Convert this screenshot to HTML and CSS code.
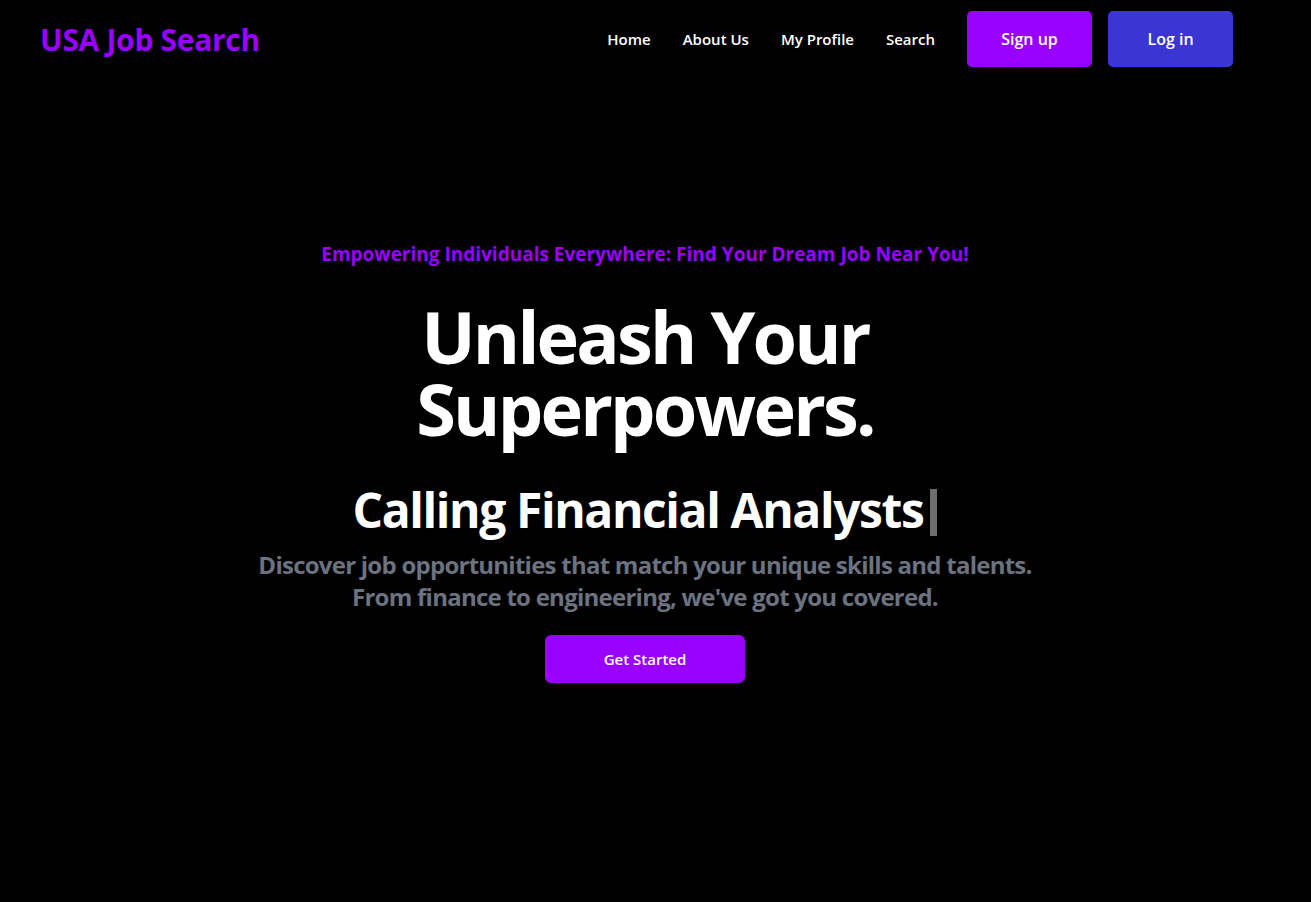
FILE: index.html
```html
<!DOCTYPE html>
<html lang="en">
<head>
<meta charset="utf-8">
<title>USA Job Search</title>
<link rel="stylesheet" href="styles.css">
</head>
<body>
<header class="nav">
  <a class="logo" href="#">USA Job Search</a>
  <nav class="menu">
    <a class="menu-link" href="#">Home</a>
    <a class="menu-link" href="#">About Us</a>
    <a class="menu-link" href="#">My Profile</a>
    <a class="menu-link" href="#">Search</a>
    <div class="auth">
      <a class="btn btn-signup" href="#">Sign up</a>
      <a class="btn btn-login" href="#">Log in</a>
    </div>
  </nav>
</header>
<main class="hero">
  <p class="eyebrow">Empowering Individuals Everywhere: Find Your Dream Job Near You!</p>
  <h1 class="title">Unleash Your<br>Superpowers.</h1>
  <h2 class="typed">Calling Financial Analysts<span class="cursor"></span></h2>
  <p class="lead">Discover job opportunities that match your unique skills and talents.<br>From finance to engineering, we've got you covered.</p>
  <a class="cta" href="#">Get Started</a>
</main>
</body>
</html>
```
FILE: styles.css
```css
* { box-sizing: border-box; }
html, body { margin: 0; padding: 0; }
body {
  background: #000;
  color: #fff;
  font-family: "Open Sans", "Noto Sans", sans-serif;
  min-height: 902px;
}
a { text-decoration: none; }

.nav {
  display: flex;
  align-items: center;
  justify-content: space-between;
  height: 78px;
  padding: 0 78px 0 40px;
}
.logo {
  color: #9900ff;
  font-size: 30px;
  font-weight: 700;
  letter-spacing: -0.3px;
}
.menu {
  display: flex;
  align-items: center;
  gap: 32px;
}
.menu-link {
  color: #fff;
  font-size: 15px;
  font-weight: 600;
}
.auth {
  display: flex;
  gap: 16px;
}
.btn {
  width: 125px;
  height: 56px;
  border-radius: 5px;
  display: flex;
  align-items: center;
  justify-content: center;
  color: #fff;
  font-size: 16px;
  font-weight: 600;
}
.btn-signup { background: #9900ff; }
.btn-login { background: #3b35d3; }

.hero {
  display: flex;
  flex-direction: column;
  align-items: center;
  text-align: center;
  padding: 162px 21px 0 0;
}
.eyebrow {
  margin: 0;
  color: #9900ff;
  font-size: 19px;
  line-height: 28px;
  font-weight: 700;
}
.title {
  margin: 32px 0 0;
  font-size: 72px;
  line-height: 72px;
  font-weight: 700;
  letter-spacing: -2.8px;
  color: #fff;
}
.typed {
  margin: 40px 0 0;
  font-size: 48px;
  line-height: 52px;
  font-weight: 700;
  letter-spacing: -1.4px;
  color: #fff;
  display: flex;
  align-items: center;
}
.cursor {
  display: inline-block;
  width: 7px;
  height: 47px;
  margin-left: 7px;
  margin-top: 4px;
  background: #6e6e6e;
}
.lead {
  margin: 13px 0 0;
  color: #6b7280;
  font-size: 24px;
  line-height: 32px;
  font-weight: 700;
  letter-spacing: -0.75px;
}
.cta {
  margin-top: 22px;
  width: 200px;
  height: 48px;
  border-radius: 6px;
  background: #9900ff;
  color: #fff;
  font-size: 15px;
  font-weight: 600;
  display: flex;
  align-items: center;
  justify-content: center;
}
```
